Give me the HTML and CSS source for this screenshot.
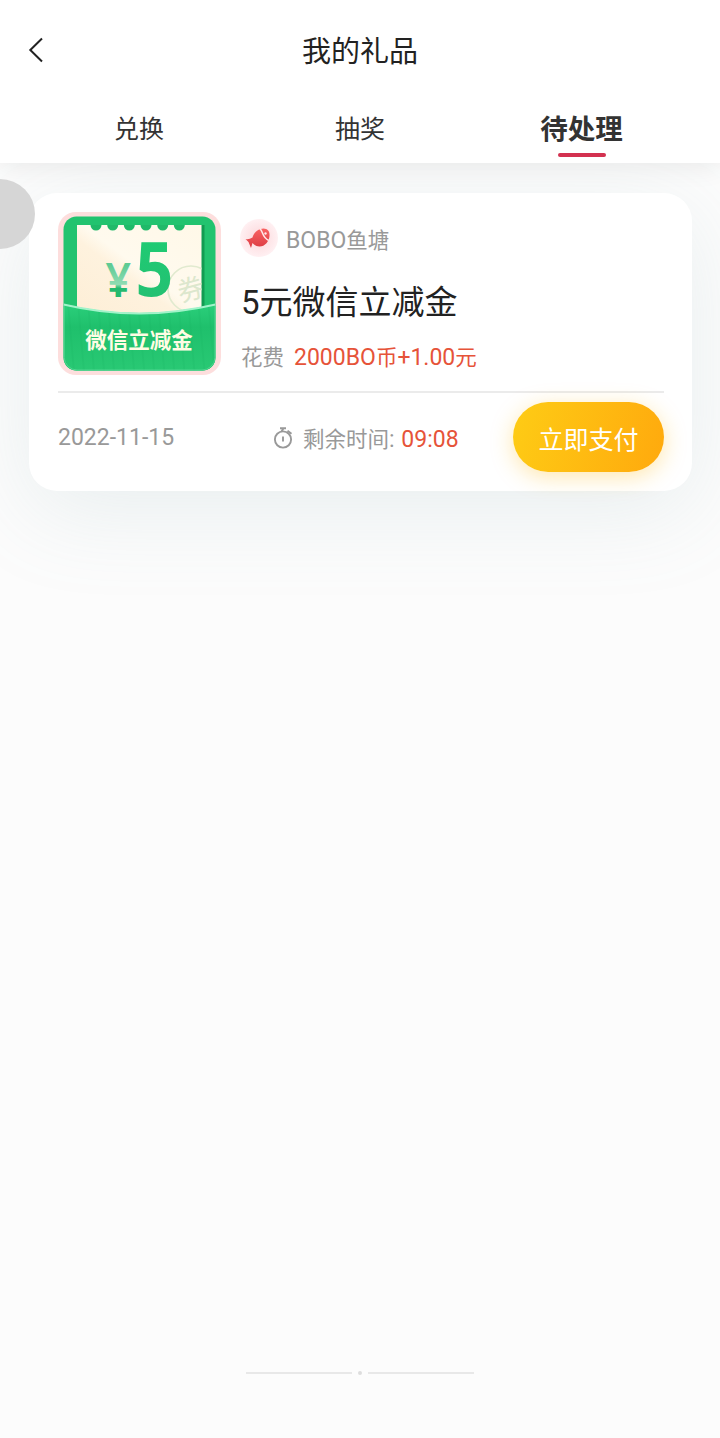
FILE: index.html
```html
<!DOCTYPE html>
<html lang="zh-CN">
<head>
<meta charset="utf-8">
<title>我的礼品</title>
<link rel="stylesheet" href="styles.css">
</head>
<body>
<header class="header">
  <div class="navbar">
    <svg class="back" width="16" height="26" viewBox="0 0 16 26"><path d="M14 1.500 2.300 13 14 24.500" fill="none" stroke="#222" stroke-width="2"/></svg>
    <h1 class="title">我的礼品</h1>
  </div>
  <nav class="tabs">
    <a class="tab">兑换</a>
    <a class="tab">抽奖</a>
    <a class="tab tab-active">待处理</a>
  </nav>
</header>
<div class="float-ball"></div>
<main class="content">
  <article class="card">
    <section class="gift">
      <svg class="cover" width="163" height="163" viewBox="0 0 163 163">
        <defs>
          <linearGradient id="paper" x1="0" y1="1" x2="1" y2="0"><stop offset="0" stop-color="#fdeed6"/><stop offset=".42" stop-color="#fef2de"/><stop offset=".52" stop-color="#fffaee"/><stop offset="1" stop-color="#fff8e8"/></linearGradient>
          <linearGradient id="pocket" x1="0" y1="0" x2="0" y2="1"><stop offset="0" stop-color="#2bcf7b"/><stop offset=".35" stop-color="#1fc06c"/><stop offset="1" stop-color="#29c974"/></linearGradient>
          <linearGradient id="five" x1="0" y1="0" x2="0" y2="1"><stop offset="0" stop-color="#1dcf73"/><stop offset="1" stop-color="#25bd72"/></linearGradient>
          <linearGradient id="yen" x1="0" y1="0" x2="0" y2="1"><stop offset=".3" stop-color="#5fcb94"/><stop offset=".6" stop-color="#8fdcb2"/><stop offset=".66" stop-color="#25b96e"/></linearGradient>
          <pattern id="ribs" width="10" height="60" patternUnits="userSpaceOnUse" patternTransform="rotate(-5)"><path d="M2 0V60" stroke="#13ad5c" stroke-width="2" opacity=".15"/></pattern>
          <clipPath id="paperClip"><path d="M19 13H143.500V105H19z"/></clipPath>
          <clipPath id="coverClip"><rect x="5.500" y="4.500" width="152" height="154" rx="13"/></clipPath>
        </defs>
        <rect width="163" height="163" rx="18" fill="#fddedd"/>
        <rect x="5.500" y="4.500" width="152" height="154" rx="13" fill="#22c36f"/>
        <path d="M143 13h3.500v85h-3.500z" fill="#119c52"/>
        <path d="M19 13H143.500V105H19z" fill="url(#paper)"/>
        <g fill="#20b969"><circle cx="38" cy="13" r="5.500"/><circle cx="54.700" cy="13" r="5.500"/><circle cx="71.300" cy="13" r="5.500"/><circle cx="88" cy="13" r="5.500"/><circle cx="104.700" cy="13" r="5.500"/><circle cx="121.300" cy="13" r="5.500"/></g>
        <path d="M28 6h103v7H28z" fill="#22c36f"/>
        <g clip-path="url(#paperClip)">
          <circle cx="133" cy="77" r="23" fill="none" stroke="#e1eacf" stroke-width="1.700"/>
          <text class="stamp" x="133" y="87" text-anchor="middle" transform="rotate(-15 133 77)">券</text>
        </g>
        <text class="amount" transform="translate(77.500 84) scale(.88 1)" fill="url(#five)">5</text>
        <text class="yen" transform="translate(47.500 84.500) scale(.95 1)" fill="url(#yen)">¥</text>
        <g clip-path="url(#coverClip)">
          <path d="M5.500 92Q81 110 157.500 92V159H5.500z" fill="url(#pocket)"/>
          <path d="M5.500 92Q81 110 157.500 92V159H5.500z" fill="url(#ribs)"/>
          <path d="M5.500 92.500Q81 110.500 157.500 92.500" fill="none" stroke="#a2f3ca" stroke-width="2"/>
        </g>
        <path d="M6.200 94V145.500a13 13 0 0 0 13 12.500H144a13 13 0 0 0 13-12.500V94" fill="none" stroke="#4fd590" stroke-width="1"/>
        <text class="cover-label" x="81" y="135.500" text-anchor="middle">微信立减金</text>
      </svg>
      <div class="info">
        <div class="shop">
          <svg width="38" height="38" viewBox="0 0 38 38">
            <defs><linearGradient id="fish" x1="0" y1="0" x2="0" y2="1"><stop offset="0" stop-color="#f96363"/><stop offset="1" stop-color="#dc3b43"/></linearGradient>
            <radialGradient id="halo"><stop offset=".35" stop-color="#fddfe2"/><stop offset="1" stop-color="#fff0f2"/></radialGradient></defs>
            <circle cx="19" cy="19" r="19" fill="url(#halo)"/>
            <path d="M12.500 18.500C14 13 18.500 9.500 23.500 9.500C27.500 9.700 29.800 12 29.500 16.500C29.300 22.500 25 27.500 19.500 27.500C16.500 27.500 14 26 12.500 24L11 29 8.500 23 5.500 20Q9 20.700 12.500 18.500z" fill="url(#fish)"/>
            <path d="M20 9.800C23 12 22 18.500 28.700 21.500" fill="none" stroke="#ffe8e8" stroke-width="1.500"/>
            <circle cx="25.500" cy="14.500" r="1.200" fill="#ffe8e8"/>
          </svg>
          <span><span class="latin">BOBO</span>鱼塘</span>
        </div>
        <h2 class="name">5元微信立减金</h2>
        <p class="cost">花费<span class="price"><span class="latin">2000BO</span>币<span class="latin">+1.00</span>元</span></p>
      </div>
    </section>
    <footer class="order">
      <time class="date">2022-11-15</time>
      <div class="remain">
        <svg class="timer" width="20" height="22" viewBox="0 0 20 22" fill="none" stroke="#999" stroke-width="1.900"><circle cx="10" cy="12.500" r="8.100"/><path d="M10 9.500v5M7 1.200H13M10.500 1.200 8.500 4.500M14.500 3.700l4 3"/></svg>
        <span>剩余时间<span class="latin">: </span><b class="countdown">09:08</b></span>
      </div>
      <button class="pay">立即支付</button>
    </footer>
  </article>
</main>
<div class="end-mark"><i class="line"></i><i class="dot"></i><i class="line"></i></div>
</body>
</html>
```

FILE: styles.css
```css
* { box-sizing: border-box; }
body {
  margin: 0;
  height: 1438px;
  display: flex;
  flex-direction: column;
  overflow: hidden;
  background: #fcfcfc;
  color: #222;
  font-family: Roboto, "Noto Sans CJK SC", sans-serif;
}
h1, h2, p { margin: 0; font-weight: 400; }
.header {
  position: relative;
  z-index: 1;
  height: 163px;
  background: #fff;
  box-shadow: 0 4px 24px rgba(0, 0, 0, .075);
}
.navbar {
  display: grid;
  grid-template-columns: 60px 1fr 60px;
  align-items: center;
  height: 100px;
}
.back { margin-left: 28px; }
.title { padding-top: 4px; font-size: 29px; line-height: 42px; text-align: center; }
.tabs {
  display: grid;
  grid-template-columns: repeat(3, 221px);
  justify-content: center;
  height: 63px;
}
.tab {
  display: flex;
  flex-direction: column;
  align-items: center;
  font-size: 25px;
  line-height: 59px;
  color: #333;
}
.tab-active { padding-left: 1px; font-size: 27.500px; font-weight: 700; }
.tab-active::after {
  content: "";
  width: 48px;
  height: 4px;
  margin-top: -6px;
  border-radius: 2px;
  background: #d33150;
}
.float-ball {
  position: absolute;
  z-index: 2;
  top: 179px;
  left: -35px;
  width: 70px;
  height: 70px;
  border-radius: 50%;
  background: #d6d6d6;
}
.content { flex: 1; padding: 30px 28px 0 29px; }
.card {
  height: 298px;
  padding: 19px 28px 0 29px;
  border-radius: 28px;
  background: #fff;
  box-shadow: 0 20px 90px rgba(120, 160, 165, .15);
}
.gift {
  display: flex;
  gap: 20px;
  height: 181px;
  border-bottom: 2px solid #ebebeb;
}
.cover { flex: none; }
.amount { font: 700 75px "Noto Sans", sans-serif; }
.yen { font: 600 47px "Noto Sans", sans-serif; }
.stamp { font: 400 27px "Noto Sans CJK SC", sans-serif; fill: #dce7cd; }
.cover-label { font: 700 21.500px "Noto Sans CJK SC", sans-serif; fill: #fffce4; }
.info { padding-top: 7px; }
.latin { font-size: 23px; }
.shop {
  display: flex;
  align-items: center;
  gap: 8px;
  height: 38px;
  margin-left: -1px;
  font-size: 21.500px;
  line-height: 38px;
  color: #999;
}
.shop > span { padding-top: 5px; }
.name { margin-top: 21px; font-size: 33px; line-height: 50px; }
.cost { margin-top: 13px; font-size: 21.500px; line-height: 34px; color: #999; }
.price { margin-left: 10px; color: #e65339; }
.order {
  display: flex;
  align-items: center;
  height: 88px;
  font-size: 23px;
  color: #999;
}
.date { width: 215px; }
.remain { display: flex; align-items: center; gap: 10px; flex: 1; font-size: 21.500px; }
.timer { margin-top: 2px; }
.countdown { margin-left: 1px; font-size: 23px; font-weight: 400; color: #e65339; }
.pay {
  width: 151px;
  height: 70px;
  padding: 2px 0 0;
  border: 0;
  border-radius: 35px;
  background: linear-gradient(105deg, #fecc15, #ffa90d);
  box-shadow: 0 5px 22px rgba(255, 185, 20, .34);
  color: #fff;
  font: 25px Roboto, "Noto Sans CJK SC", sans-serif;
}
.end-mark {
  display: flex;
  justify-content: center;
  align-items: center;
  gap: 6px;
  height: 4px;
  margin-bottom: 63px;
}
.line { width: 106px; height: 2px; background: #e8e8e8; }
.dot { width: 4px; height: 4px; border-radius: 50%; background: #ddd; }
```
